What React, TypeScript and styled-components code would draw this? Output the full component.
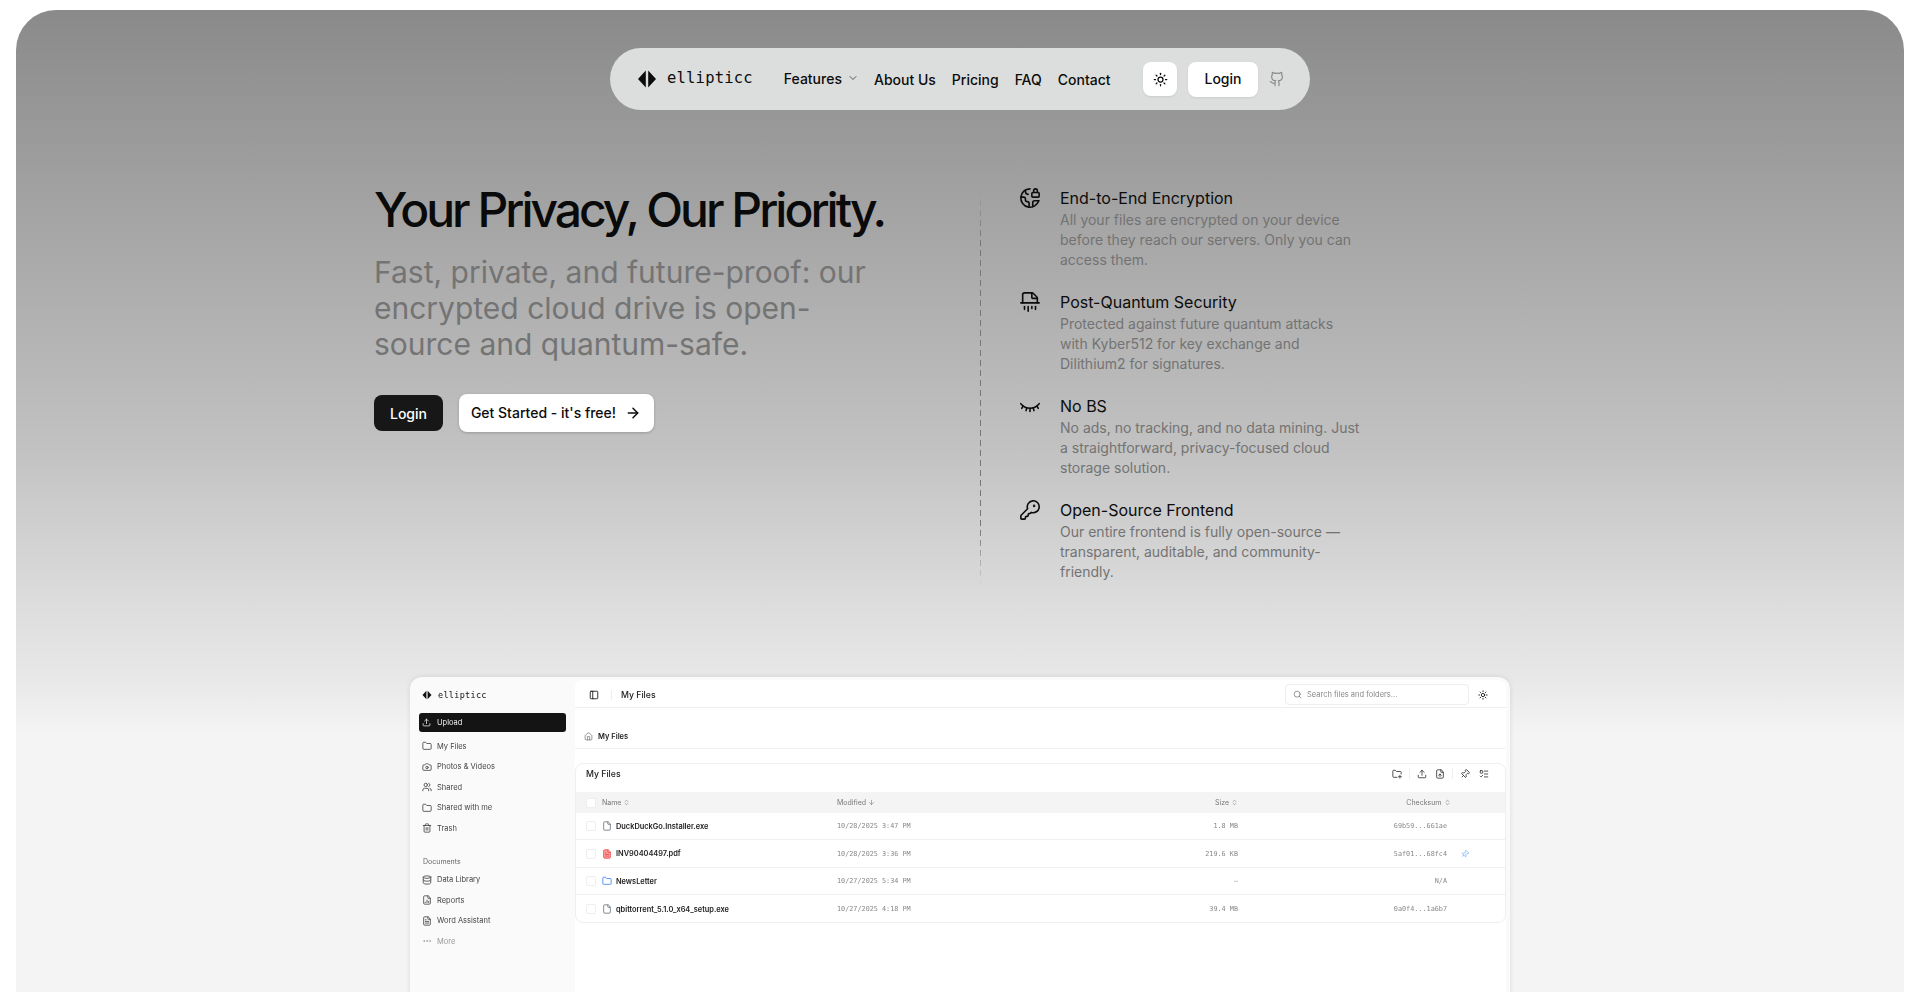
import * as React from 'react'
import styled, { createGlobalStyle } from 'styled-components'
import {
  ArrowRight,
  ArrowDown,
  ChevronDown,
  ChevronsUpDown,
  Sun,
  Upload,
  Folder,
  Camera,
  Users,
  Trash2,
  Database,
  FileChartColumn,
  FileText,
  File,
  Ellipsis,
  PanelLeft,
  House,
  Search,
  FileUp,
  Pin,
  ListTodo,
  Github,
  EarthLock,
  Shredder,
  KeyRound,
} from 'lucide-react'

const GlobalStyle = createGlobalStyle`
  html, body {
    margin: 0;
    height: 993px;
    overflow: hidden;
    background: #fff;
  }
  body {
    font-family: Inter, "Noto Sans", sans-serif;
    color: #0c0c0c;
  }
`

const features = [
  {
    icon: <EarthLock size={22} strokeWidth={1.75} />,
    title: 'End-to-End Encryption',
    text: 'All your files are encrypted on your device before they reach our servers. Only you can access them.',
  },
  {
    icon: <Shredder size={22} strokeWidth={1.75} />,
    title: 'Post-Quantum Security',
    text: 'Protected against future quantum attacks with Kyber512 for key exchange and Dilithium2 for signatures.',
  },
  {
    icon: (
      <svg width="22" height="22" viewBox="0 0 24 24" fill="none" stroke="currentColor" strokeWidth="1.75" strokeLinecap="round">
        <path d="M2 9.500c3 3.500 6.200 5 10 5s7-1.500 10-5" />
        <path d="M4.500 12 3 14.500M19.500 12l1.500 2.500M8.500 14l-.8 3M15.500 14l.8 3M12 14.500V18" />
      </svg>
    ),
    title: 'No BS',
    text: 'No ads, no tracking, and no data mining. Just a straightforward, privacy-focused cloud storage solution.',
  },
  {
    icon: <KeyRound size={22} strokeWidth={1.75} />,
    title: 'Open-Source Frontend',
    text: 'Our entire frontend is fully open-source — transparent, auditable, and community-friendly.',
  },
]

const sideTop = [
  { icon: <Folder size={10} />, label: 'My Files' },
  { icon: <Camera size={10} />, label: 'Photos & Videos' },
  { icon: <Users size={10} />, label: 'Shared' },
  { icon: <Folder size={10} />, label: 'Shared with me' },
  { icon: <Trash2 size={10} />, label: 'Trash' },
]

const sideDocs = [
  { icon: <Database size={10} />, label: 'Data Library' },
  { icon: <FileChartColumn size={10} />, label: 'Reports' },
  { icon: <FileText size={10} />, label: 'Word Assistant' },
]

const files = [
  { icon: <File size={10} color="#6b7280" />, name: 'DuckDuckGo.Installer.exe', date: '10/28/2025 3:47 PM', size: '1.8 MB', sum: '69b59...661ae', pin: false, h: 27 },
  { icon: <FileText size={10} color="#ef4444" fill="#fca5a5" />, name: 'INV90404497.pdf', date: '10/28/2025 3:36 PM', size: '219.6 KB', sum: '5af01...68fc4', pin: true, h: 28 },
  { icon: <Folder size={10} color="#3b82f6" />, name: 'NewsLetter', date: '10/27/2025 5:34 PM', size: '—', sum: 'N/A', pin: false, h: 27 },
  { icon: <File size={10} color="#6b7280" />, name: 'qbittorrent_5.1.0_x64_setup.exe', date: '10/27/2025 4:18 PM', size: '39.4 MB', sum: '0a0f4...1a6b7', pin: false, h: 28 },
]

const Logo = ({ size }: { size: number }) => (
  <svg width={size} height={size} viewBox="0 0 20 20" fill="currentColor">
    <path d="M8.800 1.500v17L1 10zM11.200 1.500v17L19 10z" />
  </svg>
)

const NewFolderIcon = () => (
  <svg width="10" height="10" viewBox="0 0 24 24" fill="none" stroke="currentColor" strokeWidth="2" strokeLinecap="round" strokeLinejoin="round">
    <path d="M12 20H4a2 2 0 0 1-2-2V5a2 2 0 0 1 2-2h4l3 3h9a2 2 0 0 1 2 2v4" />
    <path d="M19 15v7M15.500 18.500h7" />
  </svg>
)

export default function App() {
  return (
    <>
      <GlobalStyle />
      <Panel>
        <NavBar>
          <Brand>
            <Logo size={20} />
            <BrandName>ellipticc</BrandName>
          </Brand>
          <NavLinks>
            <FeatureLink>
              Features <ChevronDown size={12} color="#555" />
            </FeatureLink>
            <NavLink>About Us</NavLink>
            <NavLink>Pricing</NavLink>
            <NavLink>FAQ</NavLink>
            <NavLink>Contact</NavLink>
          </NavLinks>
          <NavActions>
            <ThemeButton>
              <Sun size={15} />
            </ThemeButton>
            <NavLogin>Login</NavLogin>
            <Github size={16} color="#8b8b8b" strokeWidth={1.75} />
          </NavActions>
        </NavBar>

        <Hero>
          <HeroLeft>
            <Title>Your Privacy, Our Priority.</Title>
            <Lead>Fast, private, and future-proof: our encrypted cloud drive is open-source and quantum-safe.</Lead>
            <CtaRow>
              <DarkButton>Login</DarkButton>
              <LightButton>
                Get Started - it's free! <ArrowRight size={16} strokeWidth={2.25} />
              </LightButton>
            </CtaRow>
          </HeroLeft>
          <DashedRule />
          <FeatureList>
            {features.map((f) => (
              <Feature key={f.title}>
                <FeatureIcon>{f.icon}</FeatureIcon>
                <div>
                  <FeatureTitle>{f.title}</FeatureTitle>
                  <FeatureText>{f.text}</FeatureText>
                </div>
              </Feature>
            ))}
          </FeatureList>
        </Hero>

        <Shot>
          <Sidebar>
            <SideBrand>
              <Logo size={10} />
              <SideBrandName>ellipticc</SideBrandName>
            </SideBrand>
            <UploadButton>
              <Upload size={9} /> Upload
            </UploadButton>
            <SideGroup>
              {sideTop.map((i) => (
                <SideItem key={i.label}>
                  {i.icon}
                  {i.label}
                </SideItem>
              ))}
            </SideGroup>
            <SideHeading>Documents</SideHeading>
            <SideGroup>
              {sideDocs.map((i) => (
                <SideItem key={i.label}>
                  {i.icon}
                  {i.label}
                </SideItem>
              ))}
              <SideItem $muted>
                <Ellipsis size={10} />
                More
              </SideItem>
            </SideGroup>
          </Sidebar>
          <Main>
            <TopBar>
              <PanelLeft size={10} />
              <TopDivider />
              <TopTitle>My Files</TopTitle>
              <SearchBox>
                <Search size={9} color="#777" />
                Search files and folders...
              </SearchBox>
              <Sun size={10} />
            </TopBar>
            <Crumbs>
              <House size={9} color="#777" />
              My Files
            </Crumbs>
            <FileCard>
              <CardHead>
                <CardTitle>My Files</CardTitle>
                <CardTools>
                  <NewFolderIcon />
                  <ToolDivider />
                  <Upload size={10} />
                  <FileUp size={10} />
                  <ToolDivider />
                  <AngledPin size={10} />
                  <ListTodo size={10} />
                </CardTools>
              </CardHead>
              <TableHead>
                <Check />
                <HeadCell>
                  Name <ChevronsUpDown size={7} />
                </HeadCell>
                <HeadCell>
                  Modified <ArrowDown size={7} />
                </HeadCell>
                <RightHead>
                  Size <ChevronsUpDown size={7} />
                </RightHead>
                <ChecksumHead>
                  Checksum <ChevronsUpDown size={7} />
                </ChecksumHead>
                <span />
              </TableHead>
              {files.map((f) => (
                <FileRow key={f.name} $h={f.h}>
                  <Check />
                  <FileName>
                    {f.icon}
                    {f.name}
                  </FileName>
                  <Mono>{f.date}</Mono>
                  <MonoRight>{f.size}</MonoRight>
                  <MonoRight>{f.sum}</MonoRight>
                  <PinCell>{f.pin && <AngledPin size={8} />}</PinCell>
                </FileRow>
              ))}
            </FileCard>
          </Main>
        </Shot>
      </Panel>
    </>
  )
}

const Panel = styled.main`
  box-sizing: border-box;
  margin: 10px 16px 0;
  height: 982px;
  overflow: hidden;
  border-radius: 40px 40px 0 0;
  background: linear-gradient(180deg, #8a8a8a 0, #c2c2c2 440px, #dcdcdc 590px, #e8e8e8 670px, #f4f4f4 725px, #f4f4f4 100%);
  padding-top: 38px;
  display: flex;
  flex-direction: column;
  align-items: center;
`

const NavBar = styled.nav`
  box-sizing: border-box;
  width: 700px;
  height: 62px;
  flex: none;
  border-radius: 31px;
  background: #dcdedd;
  display: flex;
  align-items: center;
  padding: 0 25px 0 27px;
`

const Brand = styled.div`
  display: flex;
  align-items: center;
  gap: 10px;
  color: #0c0c0c;
`

const BrandName = styled.span`
  font-family: "DejaVu Sans Mono", "Liberation Mono", monospace;
  font-size: 15.500px;
  letter-spacing: 0.2px;
  position: relative;
  top: -1px;
`

const NavLinks = styled.div`
  display: flex;
  align-items: center;
  gap: 16px;
  margin-left: 30px;
  padding-bottom: 2px;
  font-size: 14px;
  font-weight: 500;
`

const NavLink = styled.span`
  white-space: nowrap;
  position: relative;
  top: 1px;
`

const FeatureLink = styled.span`
  display: flex;
  align-items: center;
  gap: 5px;
  margin: 0 -1px 0 1px;
  white-space: nowrap;
`

const NavActions = styled.div`
  display: flex;
  align-items: center;
  margin-left: auto;
  gap: 11px;
`

const ThemeButton = styled.div`
  width: 34px;
  height: 34px;
  border-radius: 8px;
  background: #fff;
  display: flex;
  align-items: center;
  justify-content: center;
  box-shadow: 0 1px 2px rgba(0, 0, 0, 0.08);
`

const NavLogin = styled.div`
  box-sizing: border-box;
  width: 70px;
  height: 35px;
  padding-bottom: 1px;
  border-radius: 8px;
  background: #fff;
  display: flex;
  align-items: center;
  justify-content: center;
  font-size: 14px;
  font-weight: 500;
  box-shadow: 0 1px 2px rgba(0, 0, 0, 0.08);
`

const Hero = styled.section`
  box-sizing: border-box;
  width: 1172px;
  height: 567px;
  flex: none;
  display: grid;
  grid-template-columns: 606px 1px 1fr;
`

const HeroLeft = styled.div`
  padding-top: 68px;
`

const Title = styled.h1`
  margin: 0;
  font-size: 48px;
  line-height: 64px;
  font-weight: 550;
  letter-spacing: -3px;
  color: #0a0a0a;
  white-space: nowrap;
`

const Lead = styled.p`
  margin: 12px 0 0;
  width: 520px;
  font-size: 30px;
  line-height: 36px;
  color: #747474;
`

const CtaRow = styled.div`
  display: flex;
  align-items: center;
  gap: 16px;
  margin-top: 32px;
`

const DarkButton = styled.div`
  width: 69px;
  height: 36px;
  border-radius: 8px;
  background: #171717;
  color: #fff;
  display: flex;
  align-items: center;
  justify-content: center;
  font-size: 14px;
  font-weight: 500;
`

const LightButton = styled.div`
  box-sizing: border-box;
  width: 195px;
  height: 38px;
  padding: 0 1px 1px 0;
  border-radius: 8px;
  background: #fff;
  display: flex;
  align-items: center;
  justify-content: center;
  gap: 9px;
  font-size: 14px;
  font-weight: 500;
  white-space: nowrap;
  box-shadow: 0 1px 3px rgba(0, 0, 0, 0.2);
`

const DashedRule = styled.div`
  margin-top: 80px;
  height: 397px;
  background: repeating-linear-gradient(180deg, #777 0 6px, transparent 6px 10px);
  mask-image: linear-gradient(180deg, transparent, #000 12%, #000 85%, transparent);
`

const FeatureList = styled.div`
  padding: 76px 0 0 38px;
  display: flex;
  flex-direction: column;
  gap: 20px;
`

const Feature = styled.div`
  display: flex;
  gap: 19px;
`

const FeatureIcon = styled.div`
  width: 22px;
  height: 22px;
  flex: none;
  padding-top: 1px;
`

const FeatureTitle = styled.div`
  font-size: 16px;
  line-height: 24px;
  font-weight: 400;
  color: #0c0c0c;
`

const FeatureText = styled.div`
  font-size: 14px;
  line-height: 20px;
  color: #737373;
  width: 300px;
`

const Shot = styled.div`
  box-sizing: border-box;
  width: 1100px;
  flex: none;
  height: 400px;
  background: #fafafa;
  border-radius: 12px 12px 0 0;
  box-shadow: 0 0 5px rgba(0, 0, 0, 0.1);
  display: grid;
  grid-template-columns: 165px 1fr;
  padding: 3px 4px 0 0;
  filter: blur(0.3px);
`

const Sidebar = styled.aside`
  padding: 10px 9px 0 9px;
  font-size: 7.500px;
  color: #444;
`

const SideBrand = styled.div`
  display: flex;
  align-items: center;
  gap: 6px;
  padding-left: 3px;
  color: #111;
`

const SideBrandName = styled.span`
  font-family: "DejaVu Sans Mono", monospace;
  font-size: 8.500px;
  letter-spacing: 0.3px;
`

const UploadButton = styled.div`
  height: 19px;
  margin-top: 13px;
  border-radius: 3px;
  background: #141414;
  color: #f2f2f2;
  display: flex;
  align-items: center;
  gap: 6px;
  padding-left: 3px;
`

const SideGroup = styled.div`
  display: flex;
  flex-direction: column;
  margin-top: 4px;
`

const SideItem = styled.div<{ $muted?: boolean }>`
  height: 20.500px;
  display: flex;
  align-items: center;
  gap: 5px;
  padding-left: 3px;
  color: ${(p) => (p.$muted ? '#999' : '#444')};
`

const SideHeading = styled.div`
  margin-top: 18px;
  padding-left: 4px;
  height: 9px;
  font-size: 7px;
  color: #666;
`

const Main = styled.div`
  background: #fff;
  border-radius: 8px 8px 0 0;
  display: flex;
  flex-direction: column;
`

const TopBar = styled.header`
  box-sizing: border-box;
  height: 28px;
  flex: none;
  border-bottom: 1px solid #eeeeee;
  display: flex;
  align-items: center;
  padding: 2px 18px 0 14px;
`

const TopDivider = styled.span`
  width: 1px;
  height: 10px;
  background: #eee;
  margin: 0 9px 0 12px;
`

const TopTitle = styled.span`
  font-size: 8.700px;
  font-weight: 500;
  color: #222;
`

const SearchBox = styled.div`
  box-sizing: border-box;
  width: 184px;
  height: 21px;
  margin-left: auto;
  margin-right: 9px;
  border: 1px solid #eee;
  border-radius: 4px;
  display: flex;
  align-items: center;
  gap: 5px;
  padding-left: 7px;
  font-size: 7.500px;
  color: #888;
`

const Crumbs = styled.div`
  box-sizing: border-box;
  height: 41px;
  flex: none;
  border-bottom: 1px solid #f2f2f2;
  display: flex;
  align-items: flex-end;
  gap: 5px;
  padding: 0 0 7px 9px;
  font-size: 7.500px;
  font-weight: 600;
  color: #222;
`

const FileCard = styled.section`
  box-sizing: border-box;
  margin-top: 14px;
  height: 160px;
  border: 1px solid #efefef;
  border-radius: 8px;
  overflow: hidden;
`

const CardHead = styled.div`
  box-sizing: border-box;
  height: 28px;
  display: flex;
  align-items: center;
  justify-content: space-between;
  padding: 0 16px 9px 10px;
`

const CardTitle = styled.span`
  font-size: 8.700px;
  font-weight: 500;
  color: #222;
`

const CardTools = styled.div`
  display: flex;
  align-items: center;
  gap: 7px;
  color: #333;

  svg:nth-of-type(2) {
    margin-right: 1px;
  }
  svg:nth-of-type(4) {
    margin-right: 2px;
  }
`

const AngledPin = styled(Pin)`
  transform: rotate(45deg);
`

const ToolDivider = styled.span`
  width: 1px;
  height: 11px;
  background: #eee;
`

const rowGrid = `
  display: grid;
  grid-template-columns: 16px 235px 1fr 110px 209px 58px;
  align-items: center;
  box-sizing: border-box;
  padding-left: 10px;
`

const TableHead = styled.div`
  ${rowGrid}
  height: 21px;
  background: #f4f4f4;
  font-size: 7px;
  color: #777;
`

const HeadCell = styled.span`
  display: flex;
  align-items: center;
  gap: 2px;
`

const RightHead = styled(HeadCell)`
  justify-content: flex-end;
`

const ChecksumHead = styled(RightHead)`
  margin-right: -3.500px;
`

const Check = styled.span`
  box-sizing: border-box;
  width: 10px;
  height: 10px;
  border: 1px solid #eee;
  border-radius: 2px;
  background: #fff;
`

const FileRow = styled.div<{ $h: number }>`
  ${rowGrid}
  height: ${(p) => p.$h}px;
  border-bottom: 1px solid #efefef;
  &:last-child {
    border-bottom: 0;
  }
`

const FileName = styled.span`
  display: flex;
  align-items: center;
  gap: 4px;
  font-size: 7.400px;
  font-weight: 600;
  color: #222;
  white-space: nowrap;
`

const Mono = styled.span`
  font-family: "DejaVu Sans Mono", monospace;
  font-size: 6.800px;
  color: #888;
  white-space: nowrap;
`

const MonoRight = styled(Mono)`
  text-align: right;
`

const PinCell = styled.span`
  color: #60a5fa;
  padding-left: 14px;
  display: flex;
`
